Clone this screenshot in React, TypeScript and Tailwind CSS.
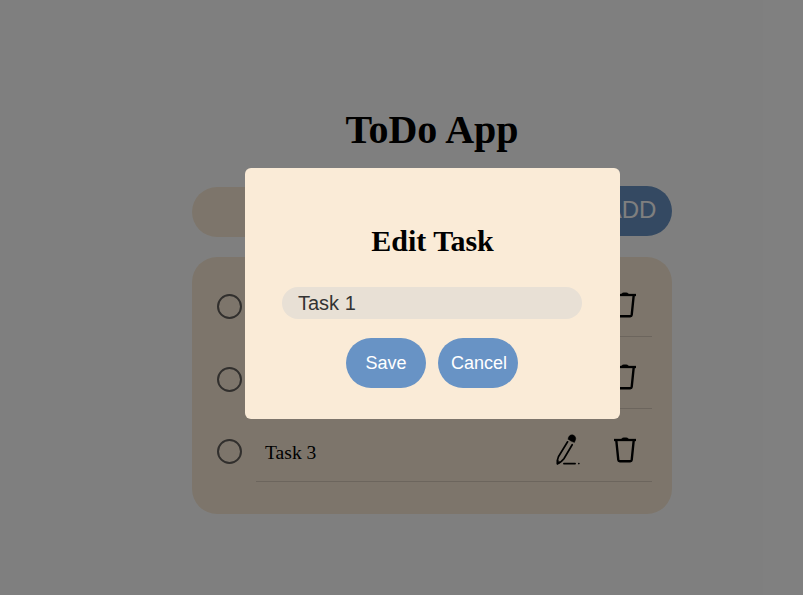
import React from "react";

function PencilIcon({ className = "" }: { className?: string }) {
  return (
    <svg className={className} width="26" height="34" viewBox="0 0 26 34" fill="none" stroke="#000" strokeLinecap="round" strokeLinejoin="round">
      <path d="M12.6 7.8 3.4 22.8Q2.2 25 2.4 29.9Q7 27.6 8.9 24.8L17.2 10.7" strokeWidth="1.7" />
      <path d="M2.3 26.4v3.6l2.8-1.3z" fill="#000" strokeWidth="0.8" />
      <path d="M13.2 5.2A3.8 3.8 0 1 1 20.3 6.4L19.4 8.5Q16 7.6 13.2 5.2z" fill="#000" strokeWidth="0.4" />
      <path d="M8.9 29.6h11.2" strokeWidth="1.7" />
      <path d="M23.8 29.6h.1" strokeWidth="1.6" />
    </svg>
  );
}

function TrashIcon({ className = "" }: { className?: string }) {
  return (
    <svg className={className} width="24" height="28" viewBox="0 0 24 28" fill="none" stroke="#000" strokeLinejoin="round">
      <path d="M1 4h22" strokeWidth="2.3" />
      <path d="M8.8 3Q9.2 1.9 10.5 1.9H13.5Q14.8 1.9 15.2 3z" fill="#000" strokeWidth="0.8" />
      <path d="M3.3 4.5 5.3 24Q5.4 25.3 6.8 25.3H17.2Q18.6 25.3 18.7 24L20.7 4.5" strokeWidth="2.4" />
    </svg>
  );
}

function TaskRow({ title, className, trashClass = "mt-[27px]" }: { title: string; className: string; trashClass?: string }) {
  return (
    <li className={`flex ${className}`}>
      <span className="mt-[30px] size-[25px] rounded-full border-2 border-[#625e5a]" />
      <div className="ml-[14px] flex flex-1 border-b border-[#d8cbbb] pl-[9px]">
        <span className="mt-[32px] flex-1 text-[19.6px] leading-[23px]">{title}</span>
        <PencilIcon className="mt-[25px]" />
        <TrashIcon className={`mr-[15px] ml-[32px] ${trashClass}`} />
      </div>
    </li>
  );
}

export default function App() {
  return (
    <div className="relative h-[595px] w-[803px] overflow-hidden bg-white font-['Liberation_Serif','Times_New_Roman',serif] text-black">
      <main className="ml-[192px] w-[480px] pt-[107px]">
        <h1 className="text-center text-[40px] leading-[46px] font-bold">ToDo App</h1>
        <div className="mt-[33px] flex">
          <div className="mt-px h-[50px] flex-1 rounded-l-[25px] bg-[#faebd7]" />
          <button className="-ml-[20px] h-[50px] w-[80px] rounded-[25px] bg-[#6893c5] pr-[2px] pb-[2px] font-['Liberation_Sans',Arial,sans-serif] text-[24px] text-white">ADD</button>
        </div>
        <ul className="mt-[20px] h-[257px] rounded-[25px] bg-[#faebd7] pt-[7px] pr-[20px] pl-[25px]">
          <TaskRow title="Task 1" className="h-[73px]" />
          <TaskRow title="Task 2" className="h-[72px]" trashClass="mt-[26px]" />
          <TaskRow title="Task 3" className="h-[73px]" />
        </ul>
      </main>
      <div className="absolute inset-0 bg-black/50">
        <section role="dialog" className="mt-[168px] ml-[245px] flex h-[251px] w-[375px] flex-col items-center rounded-[6px] bg-[#faebd7] pt-[56px]">
          <h2 className="text-[30px] leading-[34px] font-bold">Edit Task</h2>
          <div className="mt-[29px] ml-[37px] h-[32px] w-[300px] self-start rounded-[16px] bg-[#e8e0d5] pl-[16px] font-['Liberation_Sans',Arial,sans-serif] text-[20px] leading-[32px] text-[#333]">Task 1</div>
          <div className="mt-[19px] ml-[101px] flex gap-[12px] self-start font-['Liberation_Sans',Arial,sans-serif] text-[18px] text-white">
            <button className="h-[50px] w-[80px] rounded-[25px] bg-[#6893c5]">Save</button>
            <button className="h-[50px] w-[80px] rounded-[25px] bg-[#6893c5] pl-[2px]">Cancel</button>
          </div>
        </section>
      </div>
    </div>
  );
}
